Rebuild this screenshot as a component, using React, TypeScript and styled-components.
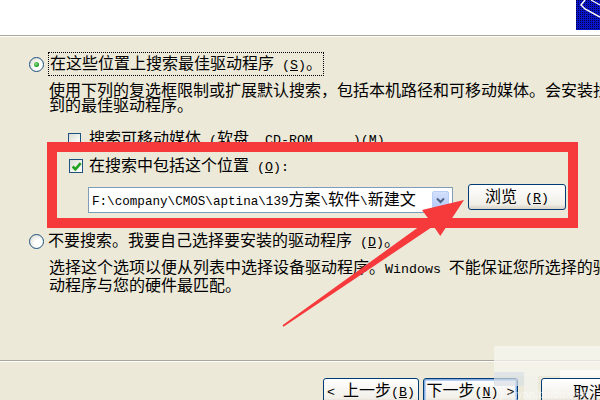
import styled, { createGlobalStyle } from "styled-components";

const GlobalStyle = createGlobalStyle`
  html, body {
    margin: 0;
    padding: 0;
  }
  body {
    background: #ece9d8;
    font-family: "Noto Sans CJK SC", "Noto Sans", sans-serif;
  }
`;

const Window = styled.div`
  position: relative;
  width: 600px;
  height: 400px;
  overflow: hidden;
  display: flex;
  flex-direction: column;
  background: #ece9d8;
  color: #000;
  font-size: 16px;
  line-height: 15px;
`;

const Header = styled.header`
  flex: none;
  height: 35px;
  background: #fff;
  display: flex;
  justify-content: flex-end;
  align-items: flex-start;
`;

const Divider = styled.div`
  flex: none;
  border-top: 1px solid #aca899;
  border-bottom: 1px solid #fff;
`;

const Body = styled.main`
  flex: 1;
  padding-left: 29px;
  white-space: nowrap;
`;

const OptionRow = styled.div<{ $top: number; $h: number }>`
  display: flex;
  align-items: center;
  gap: 4px;
  height: ${(p) => p.$h}px;
  margin-top: ${(p) => p.$top}px;
`;

const Radio = styled.span<{ $checked?: boolean }>`
  position: relative;
  flex: none;
  width: 13px;
  height: 13px;
  border: 1px solid #1c5180;
  border-radius: 50%;
  background: radial-gradient(circle at 65% 65%, #fff 30%, #e6e5de 70%, #d2d1c8);
  &::after {
    content: "";
    display: ${(p) => (p.$checked ? "block" : "none")};
    position: absolute;
    left: 4px;
    top: 4px;
    width: 5px;
    height: 5px;
    border-radius: 50%;
    background: radial-gradient(circle at 40% 40%, #8fe08f, #21a121 60%, #1a7f1a);
  }
`;

const FocusLabel = styled.span`
  border: 1px dotted #000;
  padding: 2px 1px 2px 1px;
`;

const Label = styled.span``;

const Mono = styled.span<{ $size?: number }>`
  font-family: "Liberation Mono", "Noto Sans CJK SC", monospace;
  font-size: ${(p) => p.$size ?? 13.3}px;
`;

const Key = styled.u`
  text-underline-offset: 1px;
`;

const Desc = styled.p<{ $top: number }>`
  margin: ${(p) => p.$top}px 0 0 20px;
  line-height: 15px;
`;

const CheckRow = styled.div<{ $top: number; $indent: number; $gap: number }>`
  display: flex;
  align-items: center;
  gap: ${(p) => p.$gap}px;
  height: 16px;
  margin-top: ${(p) => p.$top}px;
  padding-left: ${(p) => p.$indent}px;
`;

const CheckBox = styled.span<{ $size: number }>`
  flex: none;
  display: flex;
  align-items: center;
  justify-content: center;
  width: ${(p) => p.$size}px;
  height: ${(p) => p.$size}px;
  box-sizing: border-box;
  border: 1px solid #1c5180;
  background: linear-gradient(135deg, #dcdcd5, #f3f3ef 60%, #fff);
`;

const Highlight = styled.section`
  position: relative;
  box-sizing: border-box;
  width: 531px;
  height: 86px;
  margin: -5px 0 0 18px;
  padding: 6px 0 0 12px;
  border: 10px solid #f6393b;
  background: #ece9d8;
`;

const PathRow = styled.div`
  display: flex;
  align-items: flex-start;
  gap: 15px;
  margin: 10px 0 0 19px;
`;

const ComboBox = styled.div`
  display: flex;
  align-items: center;
  box-sizing: border-box;
  width: 365px;
  height: 26px;
  margin-top: 3px;
  padding: 0 3px 0 3px;
  border: 1px solid #7f9db9;
  background: #fff;
`;

const PathText = styled.span`
  flex: 1;
  overflow: hidden;
`;

const DropButton = styled.span`
  flex: none;
  display: flex;
  align-items: center;
  justify-content: center;
  width: 17px;
  height: 19px;
  border-radius: 2px;
  border: 1px solid #b9cdf6;
  background: linear-gradient(#d4e0fc, #b4c8f6);
  box-sizing: border-box;
`;

const XPButton = styled.button<{ $w: number; $default?: boolean }>`
  flex: none;
  width: ${(p) => p.$w}px;
  height: 26px;
  padding: 0;
  font: inherit;
  color: #000;
  border: 1px solid #003c74;
  border-radius: 3px;
  background: linear-gradient(#fff, #f1efe8 80%, #d8d2c6);
  box-shadow: ${(p) =>
    p.$default ? "inset 0 0 0 1px #88aee4, inset 0 0 0 2px #b8d0f0" : "none"};
`;

const Footer = styled.footer`
  flex: none;
  height: 40px;
  display: flex;
  flex-direction: column;
`;

const ButtonBar = styled.div`
  display: flex;
  gap: 4px;
  padding: 16px 0 0 323px;
`;

const Spacer = styled.span`
  width: 15px;
  flex: none;
`;

const Overlay = styled.svg`
  position: absolute;
  inset: 0;
  pointer-events: none;
`;

const Check = () => (
  <svg width="11" height="11" viewBox="0 0 10 10">
    <path d="M1.5 5 L4 7.5 L8.8 2" fill="none" stroke="#21a121" strokeWidth="2.4" />
  </svg>
);

const Chevron = () => (
  <svg width="9" height="7" viewBox="0 0 9 7">
    <path d="M1 1.5 L4.5 5 L8 1.5" fill="none" stroke="#4d6185" strokeWidth="2" />
  </svg>
);

const WizardIcon = () => (
  <svg width="24" height="30" viewBox="0 0 24 30">
    <defs>
      <pattern id="dither" width="2" height="2" patternUnits="userSpaceOnUse">
        <rect width="2" height="2" fill="#0a14c8" />
        <rect width="1" height="1" fill="#000040" />
      </pattern>
    </defs>
    <rect width="24" height="30" fill="url(#dither)" />
    <polyline points="9,0 5,5 9,9 24,17" fill="none" stroke="#fff" strokeWidth="1.5" />
    <line x1="15" y1="0" x2="24" y2="5" stroke="#fff" strokeWidth="1.2" />
  </svg>
);

export default function App() {
  return (
    <>
      <GlobalStyle />
      <Window>
        <Header>
          <WizardIcon />
        </Header>
        <Divider />
        <Body>
          <OptionRow $top={17} $h={20}>
            <Radio $checked />
            <FocusLabel>
              在这些位置上搜索最佳驱动程序
              <Mono>
                {" ("}
                <Key>S</Key>)
              </Mono>
              。
            </FocusLabel>
          </OptionRow>
          <Desc $top={8}>
            使用下列的复选框限制或扩展默认搜索，包括本机路径和可移动媒体。会安装找
            <br />
            到的最佳驱动程序。
          </Desc>
          <CheckRow $top={19} $indent={39} $gap={8}>
            <CheckBox $size={13} />
            <Label>
              搜索可移动媒体<Mono> (</Mono>软盘<Mono>, CD-ROM, ...)(<Key>M</Key>)</Mono>
            </Label>
          </CheckRow>
          <Highlight>
            <CheckRow $top={0} $indent={0} $gap={6}>
              <CheckBox $size={14}>
                <Check />
              </CheckBox>
              <Label>
                在搜索中包括这个位置
                <Mono>
                  {" ("}
                  <Key>O</Key>):
                </Mono>
              </Label>
            </CheckRow>
            <PathRow>
              <ComboBox>
                <PathText>
                  <Mono $size={12.6}>{"F:\\company\\CMOS\\aptina\\139"}</Mono>
                  方案<Mono $size={12.6}>{"\\"}</Mono>软件<Mono $size={12.6}>{"\\"}</Mono>新建文
                </PathText>
                <DropButton>
                  <Chevron />
                </DropButton>
              </ComboBox>
              <XPButton $w={98}>
                浏览
                <Mono>
                  {" ("}
                  <Key>R</Key>)
                </Mono>
              </XPButton>
            </PathRow>
          </Highlight>
          <OptionRow $top={5} $h={16}>
            <Radio />
            <Label>
              不要搜索。我要自己选择要安装的驱动程序
              <Mono>
                {" ("}
                <Key>D</Key>)
              </Mono>
              。
            </Label>
          </OptionRow>
          <Desc $top={10}>
            选择这个选项以便从列表中选择设备驱动程序。<Mono>Windows </Mono>不能保证您所选择的驱
            <br />
            动程序与您的硬件最匹配。
          </Desc>
        </Body>
        <Footer>
          <Divider />
          <ButtonBar>
            <XPButton $w={96}>
              <Mono>{"< "}</Mono>上一步<Mono>(<Key>B</Key>)</Mono>
            </XPButton>
            <XPButton $w={95} $default>
              下一步<Mono>(<Key>N</Key>) &gt;</Mono>
            </XPButton>
            <Spacer />
            <XPButton $w={96}>取消</XPButton>
          </ButtonBar>
        </Footer>
        <Overlay width="600" height="400" viewBox="0 0 600 400">
          <rect x="494" y="346" width="106" height="30" fill="#f7f6f0" opacity="0.75" />
          <rect x="494" y="372" width="30" height="14" fill="#d9dee6" opacity="0.7" />
          <rect x="524" y="376" width="14" height="24" fill="#f4f3ee" opacity="0.8" />
          <rect x="560" y="370" width="40" height="8" fill="#fff" opacity="0.6" />
          <text x="500" y="398" fontSize="11" fill="#fff" opacity="0.55" fontFamily="Liberation Sans, sans-serif">
            jingyan.baidu.com
          </text>
          <polygon
            points="464,200 422,210 429,219.5 282.5,325.3 283.5,326.7 433.5,226.1 440.3,236"
            fill="#f6393b"
          />
        </Overlay>
      </Window>
    </>
  );
}
